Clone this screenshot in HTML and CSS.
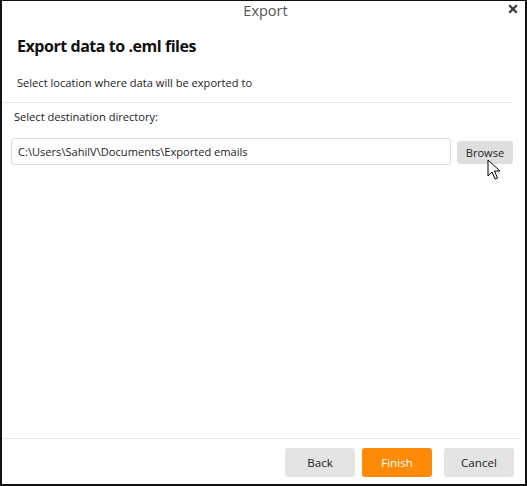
FILE: index.html
```html
<!DOCTYPE html>
<html>
<head>
<meta charset="utf-8">
<link rel="stylesheet" href="styles.css">
</head>
<body>
<div class="window">
  <div class="titlebar">
    <span class="title">Export</span>
    <svg class="close" width="10" height="10" viewBox="0 0 10 10">
      <path d="M1.2 1.2 L8.8 8.8 M8.8 1.2 L1.2 8.8" stroke="#3a3a3a" stroke-width="2.2" stroke-linecap="butt"/>
    </svg>
  </div>
  <div class="header">
    <h1 class="heading">Export data to .eml files</h1>
    <p class="subtitle">Select location where data will be exported to</p>
  </div>
  <div class="divider top"></div>
  <div class="content">
    <div class="label">Select destination directory:</div>
    <div class="row">
      <div class="path">C:\Users\SahilV\Documents\Exported emails</div>
      <div class="btn browse">Browse</div>
    </div>
  </div>
  <div class="divider bottom"></div>
  <div class="footer">
    <div class="btn back">Back</div>
    <div class="btn finish">Finish</div>
    <div class="btn cancel">Cancel</div>
  </div>
  <svg class="cursor" width="14" height="22" viewBox="0 0 14 22">
    <path d="M1 1 L1 17 L5 13 L8 20 L10.5 19 L7.5 12 L13 12 Z" fill="#fff" stroke="#000" stroke-width="1" stroke-linejoin="miter"/>
  </svg>
</div>
</body>
</html>
```

FILE: styles.css
```css
html, body {
  margin: 0;
  padding: 0;
  background: #fff;
}
body {
  font-family: "Open Sans", "Noto Sans", "Liberation Sans", sans-serif;
  color: #1a1a1a;
}
.window {
  position: relative;
  width: 527px;
  height: 486px;
  box-sizing: border-box;
  border-top: 1px solid #111;
  border-left: 2px solid #111;
  border-right: 2px solid #111;
  border-bottom: 2px solid #111;
  display: flex;
  flex-direction: column;
  background: #fff;
}
.titlebar {
  position: relative;
  height: 20px;
  display: flex;
  align-items: center;
  justify-content: center;
}
.title {
  font-size: 14.5px;
  color: #555;
  margin-left: 4px;
  margin-bottom: 2px;
}
.close {
  position: absolute;
  right: 7px;
  top: 3px;
}
.header {
  padding: 0 0 0 15px;
}
.heading {
  margin: 13px 0 0 0;
  font-size: 16px;
  letter-spacing: -0.45px;
  line-height: 24px;
  font-weight: 700;
  color: #111;
}
.subtitle {
  margin: 17px 0 0 0;
  font-size: 11.1px;
  line-height: 16px;
  color: #222;
}
.divider {
  height: 1px;
  background: #e6e6e6;
}
.divider.top {
  margin: 11px 12px 0 1px;
}
.content {
  flex: 1;
  padding: 6px 0 0 9px;
}
.label {
  font-size: 11.1px;
  line-height: 16px;
  color: #222;
  margin-left: 3px;
}
.row {
  display: flex;
  align-items: center;
  margin-top: 13px;
  gap: 6px;
}
.path {
  width: 440px;
  height: 27px;
  box-sizing: border-box;
  border: 1px solid #dcdcdc;
  border-radius: 3px;
  font-size: 11.1px;
  line-height: 25px;
  padding-left: 6px;
  color: #222;
}
.btn {
  display: flex;
  align-items: center;
  justify-content: center;
  border-radius: 3px;
  box-sizing: border-box;
  font-size: 11.1px;
  color: #222;
  background: #e4e4e4;
}
.browse {
  width: 56px;
  height: 23px;
  margin-top: 2px;
  background: #dedede;
}
.divider.bottom {
  margin: 0 4px 0 1px;
}
.footer {
  display: flex;
  justify-content: flex-end;
  padding: 9px 11px 7px 0;
}
.footer .btn {
  width: 70px;
  height: 29px;
  font-size: 11.6px;
}
.back {
  margin-right: 7px;
}
.finish {
  background: #fd8b08;
  color: #fff !important;
  margin-right: 12px;
}
.cursor {
  position: absolute;
  left: 485px;
  top: 158px;
}
```
